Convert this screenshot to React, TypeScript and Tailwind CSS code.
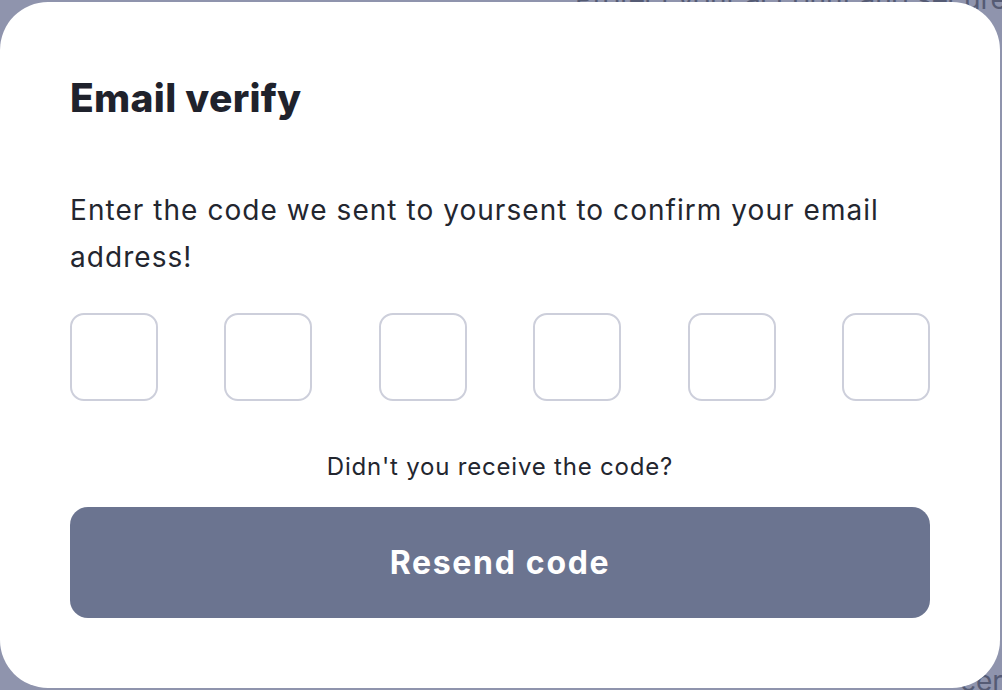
import { useState } from "react";

const font = { fontFamily: "Inter, 'Noto Sans', sans-serif" };

export default function App() {
  const [code, setCode] = useState<string[]>(["", "", "", "", "", ""]);

  return (
    <div className="relative w-[1002px] h-[690px] overflow-hidden bg-[#8f94ad]" style={font}>
      {/* page behind the overlay */}
      <div className="absolute left-[575px] top-[-22px] text-[28px] text-[#555b74] whitespace-nowrap">
        Protect your account and secure
      </div>
      <div className="absolute left-[960px] top-[660px] text-[28px] text-[#555b74] whitespace-nowrap">
        cer
      </div>

      <div className="relative flex h-full pt-[2px] pb-[2px] pr-[2px]">
        <div className="flex-1 bg-white rounded-[48px] px-[70px] pt-[72px]">
          <h1 className="text-[39px] leading-[48px] font-extrabold tracking-[0.3px] text-[#1f222c]">
            Email verify
          </h1>

          <p className="mt-[65px] text-[28px] leading-[47px] text-[#23262f] tracking-[1.05px]">
            Enter the code we sent to yoursent to confirm your email address!
          </p>

          <div className="mt-[32px] flex justify-between">
            {code.map((v, i) => (
              <input
                key={i}
                value={v}
                maxLength={1}
                onChange={(e) => {
                  const next = [...code];
                  next[i] = e.target.value;
                  setCode(next);
                }}
                className="w-[88px] h-[88px] rounded-[14px] border-2 border-[#cdcfdb] text-center text-[32px] outline-none"
              />
            ))}
          </div>

          <p className="mt-[50px] text-center text-[24px] leading-[32px] text-[#23262f] tracking-[0.8px]">
            Didn't you receive the code?
          </p>

          <button className="mt-[24px] w-full h-[111px] rounded-[18px] bg-[#6b7490] text-white text-[32px] font-bold tracking-[1.7px]">
            Resend code
          </button>
        </div>
      </div>
    </div>
  );
}
